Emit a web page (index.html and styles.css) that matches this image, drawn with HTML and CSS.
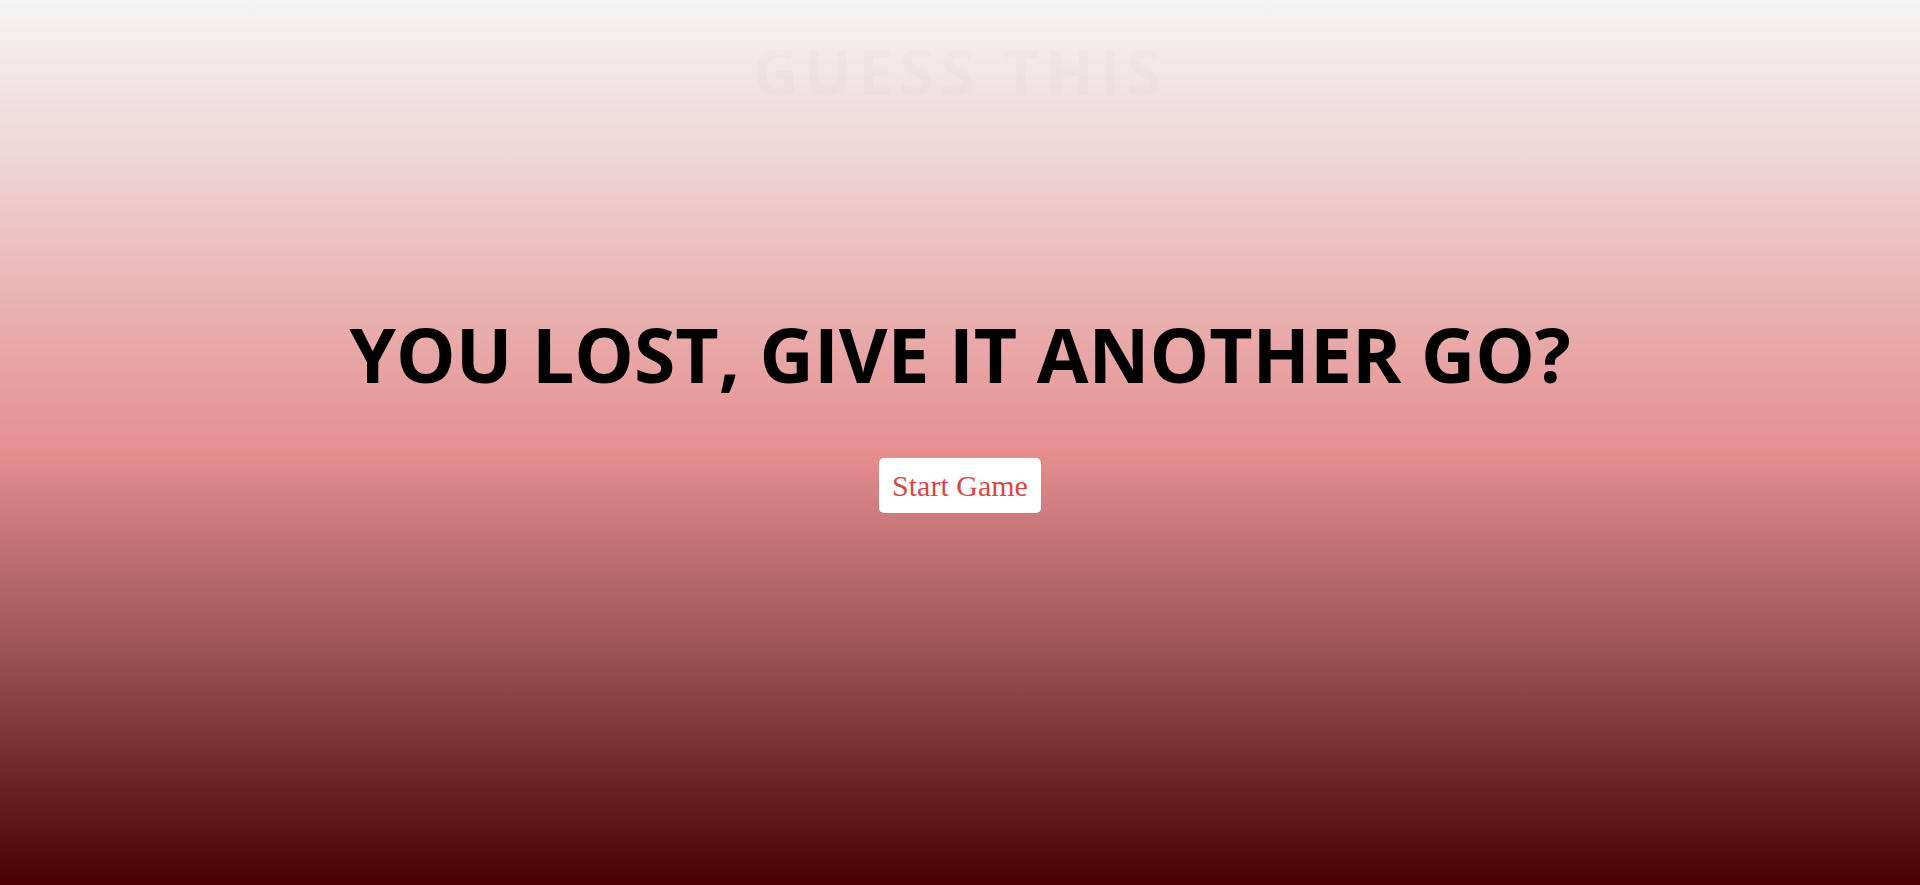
FILE: index.html
```html
<!DOCTYPE html>
<html lang="en">
<head>
<meta charset="utf-8">
<title>Guess This</title>
<link rel="stylesheet" href="styles.css">
</head>
<body>
<div class="page">
  <header class="header">
    <h1 class="brand">GUESS THIS</h1>
    <p class="stats">WINS: 0 &nbsp; LOST: 2</p>
  </header>
  <main class="result">
    <h2 class="result-title">YOU LOST, GIVE IT ANOTHER GO?</h2>
    <button class="start-btn" type="button">Start Game</button>
  </main>
</div>
</body>
</html>
```
FILE: styles.css
```css
html, body {
  margin: 0;
  padding: 0;
  height: 100%;
}
body {
  background: linear-gradient(to bottom, #f4f4f4 0%, #efd5d6 18%, #e8a6a6 40%, #e68f8f 51%, #c77677 60%, #9b5252 74%, #6c2525 88%, #4a0000 100%);
  font-family: "Open Sans", "Liberation Sans", sans-serif;
}
.page {
  height: 100%;
  display: flex;
  flex-direction: column;
  align-items: center;
}
.header {
  display: flex;
  flex-direction: column;
  align-items: center;
}
.brand {
  margin: 28px 0 0;
  font-size: 63px;
  font-weight: 700;
  line-height: 1.362;
  letter-spacing: 6px;
  color: rgba(60, 20, 20, 0.016);
}
.stats {
  margin: 4px 0 0;
  font-size: 25px;
  font-weight: 700;
  line-height: 1.362;
  letter-spacing: 2px;
  color: rgba(60, 20, 20, 0.025);
}
.result {
  display: flex;
  flex-direction: column;
  align-items: center;
  margin-top: 151px;
}
.result-title {
  margin: 0;
  font-size: 75px;
  font-weight: 700;
  line-height: 1.362;
  color: #000;
}
.start-btn {
  margin-top: 53px;
  background: #fff;
  color: #d94646;
  border: none;
  border-radius: 5px;
  padding: 10px 13px;
  font-family: "Liberation Serif", "Times New Roman", serif;
  font-size: 30px;
  line-height: 35px;
  cursor: pointer;
}
```
